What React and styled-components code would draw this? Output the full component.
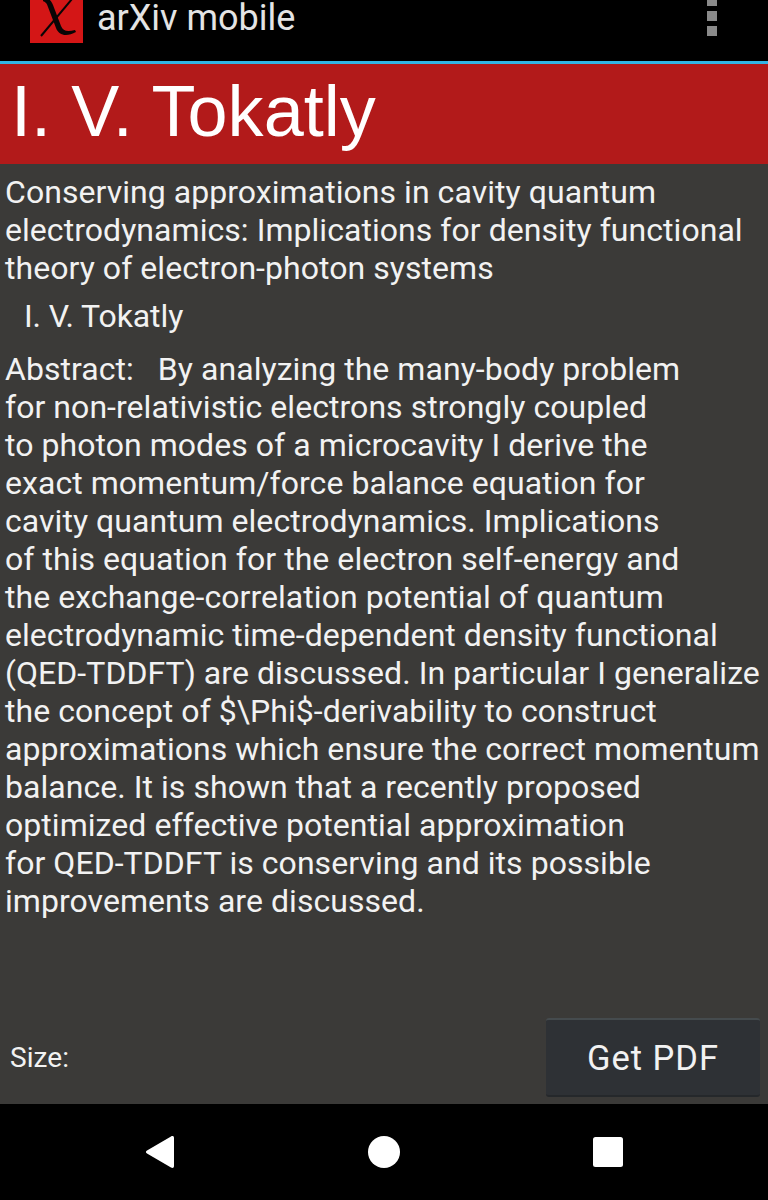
import styled, { createGlobalStyle } from "styled-components";

const GlobalStyle = createGlobalStyle`
  html, body {
    margin: 0;
    padding: 0;
    background: #000;
  }
`

const Screen = styled.div`
  width: 768px;
  height: 1200px;
  display: flex;
  flex-direction: column;
  overflow: hidden;
  background-color: #3b3a38;
  font-family: Roboto, sans-serif;
  color: #f2f2f2;
`

const ActionBar = styled.div`
  flex: none;
  height: 61px;
  display: flex;
  align-items: flex-end;
  padding: 0 51px 0 30px;
  background-color: #000;
  border-bottom: 3px solid #33b5e5;
  overflow: hidden;
`

const Logo = styled.svg`
  flex: none;
  width: 53px;
  height: 53px;
  margin-bottom: 18px;
`

const AppName = styled.div`
  flex: 1;
  font-size: 36px;
  line-height: 36px;
  color: #e4e4e4;
  margin: 0 0 25px 14px;
`

const MenuDots = styled.div`
  display: flex;
  flex-direction: column;
  gap: 5px;
  margin-bottom: 25px;
`

const Dot = styled.div`
  width: 10px;
  height: 10px;
  background-color: #8a8a8a;
`

const AuthorBanner = styled.h1`
  flex: none;
  height: 100px;
  margin: 0;
  padding-left: 11px;
  background-color: #b21a1a;
  color: #fff;
  font-family: "Liberation Sans", sans-serif;
  font-weight: normal;
  font-size: 72px;
  line-height: 94px;
  letter-spacing: 0.05px;
`

const Content = styled.div`
  flex: 1;
  display: flex;
  flex-direction: column;
  padding: 9px 0 0 5px;
  font-size: 32px;
  line-height: 38px;
  letter-spacing: 0.05px;
`

const Authors = styled.div`
  padding: 10px 0 15px 19px;
  letter-spacing: -0.1px;
`

const Abstract = styled.div`
  white-space: pre;
`

const Footer = styled.div`
  margin-top: auto;
  display: flex;
  align-items: center;
  justify-content: space-between;
  padding: 0 8px 7px 5px;
`

const SizeLabel = styled.span`
  font-size: 28px;
`

const PdfButton = styled.button`
  width: 214px;
  height: 79px;
  padding: 0;
  border: 0;
  border-top: 2px solid #454b4e;
  border-bottom: 2px solid #25282b;
  border-radius: 3px;
  background-color: #2e3135;
  color: #f2f2f2;
  font-family: Roboto, sans-serif;
  font-size: 34.5px;
  letter-spacing: 1px;
`

const NavBar = styled.div`
  flex: none;
  height: 96px;
  display: flex;
  align-items: center;
  justify-content: space-between;
  padding: 0 144px;
  background-color: #000;
`

const NavIcon = styled.svg`
  width: 32px;
  height: 34px;
  fill: #fff;
`

const abstractText = `Abstract:   By analyzing the many-body problem
for non-relativistic electrons strongly coupled
to photon modes of a microcavity I derive the
exact momentum/force balance equation for
cavity quantum electrodynamics. Implications
of this equation for the electron self-energy and
the exchange-correlation potential of quantum
electrodynamic time-dependent density functional
(QED-TDDFT) are discussed. In particular I generalize
the concept of $\\Phi$-derivability to construct
approximations which ensure the correct momentum
balance. It is shown that a recently proposed
optimized effective potential approximation
for QED-TDDFT is conserving and its possible
improvements are discussed.`

const App = () => {
  return (
    <>
      <GlobalStyle />
      <Screen>
        <ActionBar>
          <Logo viewBox="0 0 53 53">
            <rect width="53" height="53" fill="#d41616" />
            <path d="M13 9 C18 7 21 10 23 15 L31 36 C33 41 37 42 45 40 L46 42 C37 47 29 46 26 38 L18 17 C17 13 15 12 13 11 Z" fill="#0a0505" />
            <path d="M11 46 L42 9" stroke="#0a0505" strokeWidth="2" fill="none" />
          </Logo>
          <AppName>arXiv mobile</AppName>
          <MenuDots>
            <Dot />
            <Dot />
            <Dot />
          </MenuDots>
        </ActionBar>
        <AuthorBanner>I. V. Tokatly</AuthorBanner>
        <Content>
          <div>
            Conserving approximations in cavity quantum<br />
            electrodynamics: Implications for density functional<br />
            theory of electron-photon systems
          </div>
          <Authors>I. V. Tokatly</Authors>
          <Abstract>{abstractText}</Abstract>
          <Footer>
            <SizeLabel>Size:</SizeLabel>
            <PdfButton>Get PDF</PdfButton>
          </Footer>
        </Content>
        <NavBar>
          <NavIcon viewBox="0 0 32 34">
            <path d="M27 1.5 C28.5 0.5 30 1 30 3 L30 31 C30 33 28.5 33.5 27 32.5 L3 18.5 C1.5 17.5 1.5 16.5 3 15.5 Z" />
          </NavIcon>
          <NavIcon viewBox="0 0 32 34">
            <circle cx="16" cy="17" r="16" />
          </NavIcon>
          <NavIcon viewBox="0 0 32 34">
            <rect x="1" y="2" width="30" height="30" rx="2.5" />
          </NavIcon>
        </NavBar>
      </Screen>
    </>
  )
}

export default App;
